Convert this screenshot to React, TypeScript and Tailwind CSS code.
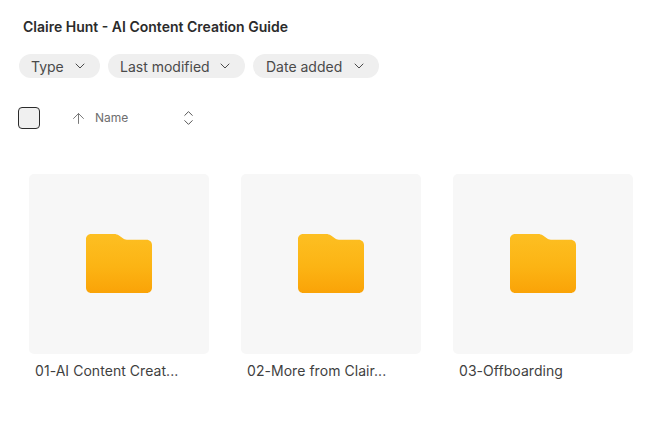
import { ArrowUp, ChevronDown, ChevronUp } from 'lucide-react'

const filters = [
  { label: 'Type', box: 'w-[81px] pl-3' },
  { label: 'Last modified', box: 'w-[137px] pl-3' },
  { label: 'Date added', box: 'w-[126px] pl-[13px]' },
]

const folders = ['01-AI Content Creat...', '02-More from Clair...', '03-Offboarding']

function FolderIcon({ id }: { id: string }) {
  return (
    <svg width="66" height="59" viewBox="0 0 66 59" className="mb-px" aria-hidden="true">
      <defs>
        <linearGradient id={id} x1="0" y1="0" x2="0" y2="1">
          <stop offset="0" stopColor="#fdbf22" />
          <stop offset="0.55" stopColor="#fcb414" />
          <stop offset="1" stopColor="#faa307" />
        </linearGradient>
      </defs>
      <path
        d="M5 0H28C30 0 31.500 0.500 33 1.500L36.500 4C38 5.200 39 5.700 41 5.700H60.500C63.800 5.700 66 8 66 11V53.500C66 56.800 63.800 59 60.500 59H5.500C2.200 59 0 56.800 0 53.500V5C0 2.200 2.200 0 5 0Z"
        fill={`url(#${id})`}
      />
    </svg>
  )
}

export default function App() {
  return (
    <div className="h-[432px] w-[658px] overflow-hidden bg-white font-['Inter',sans-serif] text-[#3a3a3a]">
      <h1 className="pl-[23px] pt-[18px] text-[14px] font-semibold leading-[18px] text-[#2b2b2b]">
        Claire Hunt - AI Content Creation Guide
      </h1>

      <div className="mt-[18px] flex gap-2 pl-[19px]">
        {filters.map((f) => (
          <div
            key={f.label}
            className={`flex h-6 items-center justify-between rounded-full bg-[#efefef] pr-3 text-[14px] text-[#4a4a4a] ${f.box}`}
          >
            <span>{f.label}</span>
            <ChevronDown size={16} strokeWidth={1.5} />
          </div>
        ))}
      </div>

      <div className="mt-[29px] flex h-[22px] items-center pl-[18px]">
        <div className="h-[22px] w-[22px] rounded-[4px] border border-[#2b2b2b] bg-[#f0f0f0]" />
        <ArrowUp size={17} strokeWidth={1.4} className="ml-[30px] text-[#777777]" />
        <span className="ml-2 w-[33px] text-[12px] text-[#6e6e6e]">Name</span>
        <div className="ml-[53px] flex flex-col text-[#4a4a4a]">
          <ChevronUp size={15} strokeWidth={1.5} className="-mb-[3px]" />
          <ChevronDown size={15} strokeWidth={1.5} className="-mt-[3px]" />
        </div>
      </div>

      <div className="mt-[45px] flex gap-8 pl-[29px]">
        {folders.map((name, i) => (
          <div key={name} className="w-[180px]">
            <div className="flex h-[180px] items-center justify-center rounded-[5px] bg-[#f7f7f7]">
              <FolderIcon id={`folder-${i}`} />
            </div>
            <div className="mt-2 pl-[6px] text-[14px] leading-[18px] tracking-[0.05px] text-[#3f3f3f]">{name}</div>
          </div>
        ))}
      </div>
    </div>
  )
}
